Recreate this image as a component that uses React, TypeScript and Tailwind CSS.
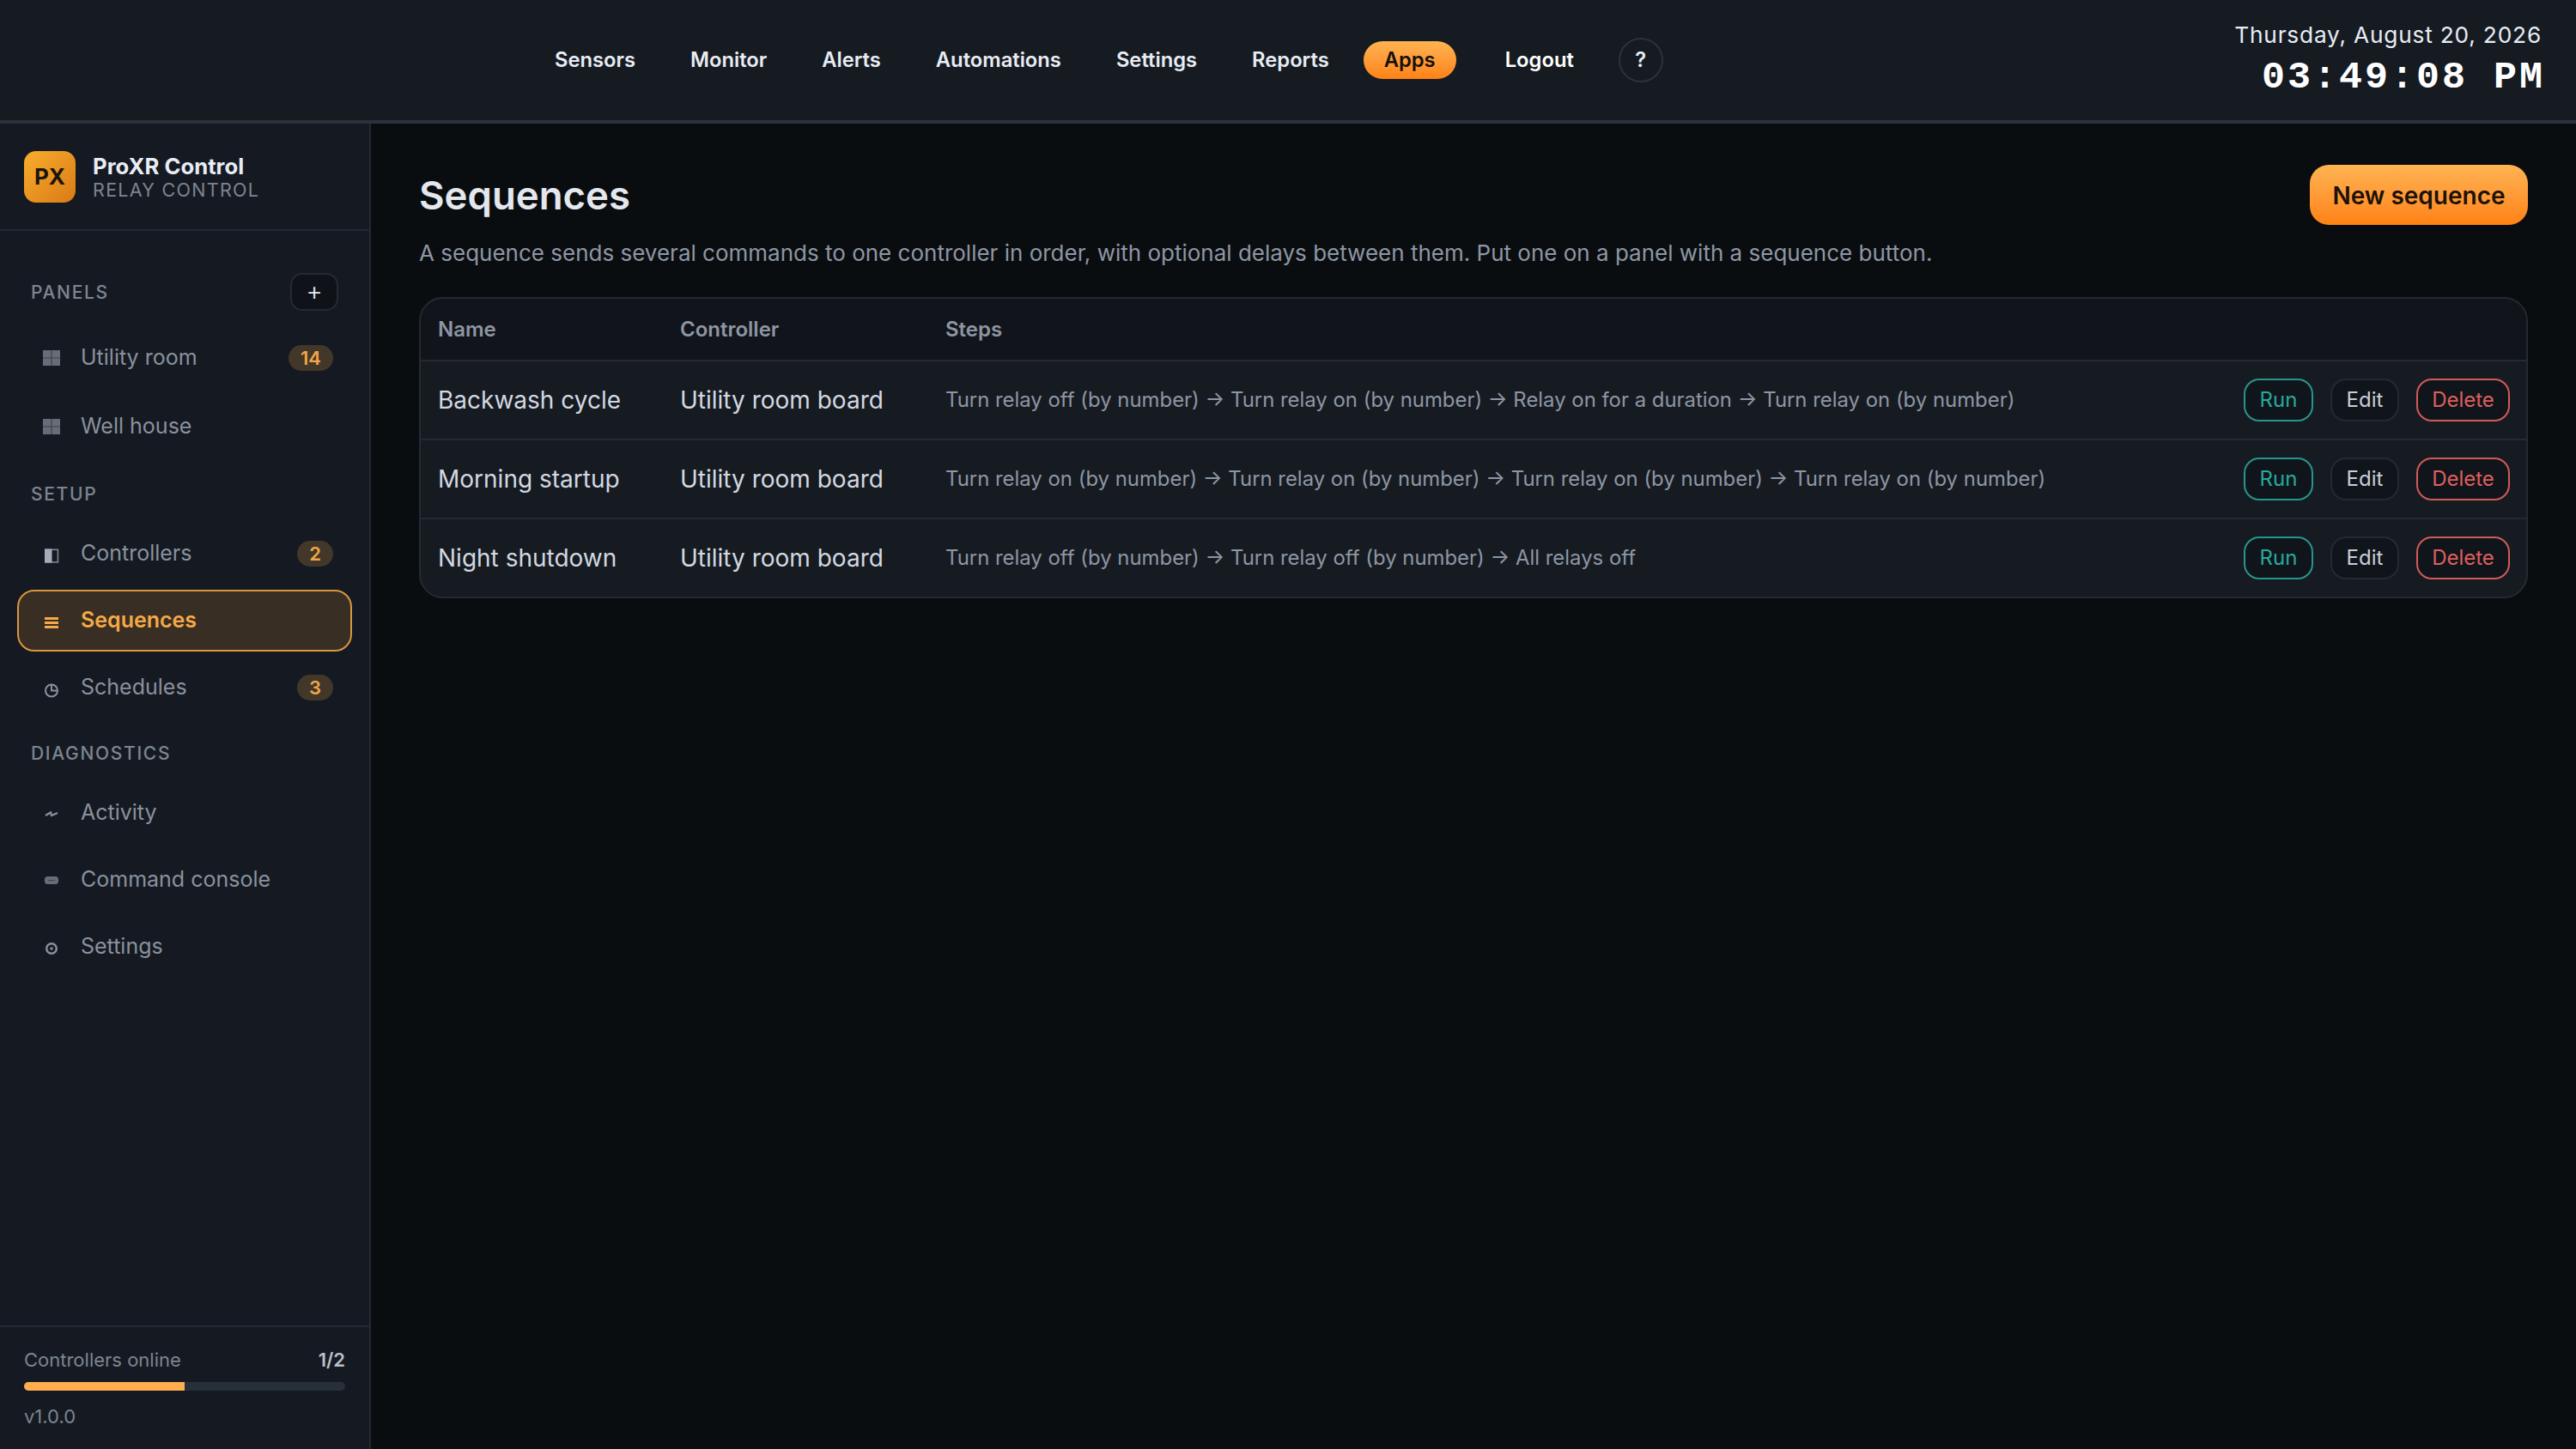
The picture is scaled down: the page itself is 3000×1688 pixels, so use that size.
import type { ReactNode } from "react"

const navItems = ["Sensors", "Monitor", "Alerts", "Automations", "Settings", "Reports"]

const GridIcon = (
    <svg viewBox="0 0 24 24" className="size-6" fill="currentColor">
        <rect x="2" y="3" width="20" height="18" opacity="0.7" />
        <path d="M12 3v18M2 12h20" stroke="#151a22" strokeWidth="1.2" opacity="0.5" />
    </svg>
)

const HalfSquareIcon = (
    <svg viewBox="0 0 24 24" className="size-6">
        <rect x="4.8" y="7.3" width="14.6" height="14.6" fill="none" stroke="#7d8590" strokeWidth="1.6" />
        <rect x="4" y="6.5" width="8.5" height="16" fill="#a4acb9" />
    </svg>
)

const LinesIcon = (
    <svg viewBox="0 0 24 24" className="size-6" fill="currentColor">
        <rect x="4" y="8" width="16" height="3" />
        <rect x="4" y="13" width="16" height="3" />
        <rect x="4" y="18" width="16" height="3" />
    </svg>
)

const ClockIcon = (
    <svg viewBox="0 0 24 24" className="size-6" fill="none" stroke="currentColor" strokeWidth="2">
        <circle cx="12" cy="15.5" r="7" />
        <path d="M12 9v6.5h7" />
    </svg>
)

const ActivityIcon = (
    <svg viewBox="0 0 24 24" className="size-6" fill="none" stroke="currentColor" strokeWidth="2.2">
        <path d="M5 15l6-3.5 1 3.5 7-3" />
    </svg>
)

const ConsoleIcon = (
    <svg viewBox="0 0 24 24" className="size-6" fill="currentColor">
        <rect x="4" y="8" width="16" height="9" rx="3.5" opacity="0.7" />
        <path d="M8 12.5h8" stroke="#151a22" strokeWidth="1" opacity="0.5" />
    </svg>
)

const SettingsIcon = (
    <svg viewBox="0 0 24 24" className="size-6" fill="none" stroke="currentColor">
        <circle cx="12" cy="14" r="5.8" strokeWidth="2.4" />
        <circle cx="12" cy="14" r="1.8" fill="currentColor" strokeWidth="0" />
    </svg>
)

interface SideItem {
    icon: ReactNode
    label: string
    badge?: string
    active?: boolean
}

const setupItems: SideItem[] = [
    { icon: HalfSquareIcon, label: "Controllers", badge: "2" },
    { icon: LinesIcon, label: "Sequences", active: true },
    { icon: ClockIcon, label: "Schedules", badge: "3" },
]

const diagnosticItems: SideItem[] = [
    { icon: ActivityIcon, label: "Activity" },
    { icon: ConsoleIcon, label: "Command console" },
    { icon: SettingsIcon, label: "Settings" },
]

const sequences = [
    {
        name: "Backwash cycle",
        steps: "Turn relay off (by number) → Turn relay on (by number) → Relay on for a duration → Turn relay on (by number)",
    },
    {
        name: "Morning startup",
        steps: "Turn relay on (by number) → Turn relay on (by number) → Turn relay on (by number) → Turn relay on (by number)",
    },
    {
        name: "Night shutdown",
        steps: "Turn relay off (by number) → Turn relay off (by number) → All relays off",
    },
]

function SideRow({ item }: { item: SideItem }) {
    return (
        <div
            className={`mx-5 flex h-[72px] items-center rounded-[20px] border-2 pl-[26px] pr-[20px] ${item.active ? "border-[#d9963f] bg-[#382e24] text-[#f5a947]" : "border-transparent text-[#8a919d]"}`}
        >
            <span className="flex w-[24px] justify-center">{item.icon}</span>
            <span className={`ml-[22px] text-[25px] ${item.active ? "font-semibold" : "font-normal"}`}>{item.label}</span>
            {item.badge && (
                <span className="ml-auto flex h-[30px] min-w-[42px] items-center justify-center rounded-full bg-[#43372a] px-[14px] text-[22px] font-semibold text-[#f0a649]">
                    {item.badge}
                </span>
            )}
        </div>
    )
}

function SectionLabel({ children }: { children: string }) {
    return <div className="pl-9 text-[21px] font-medium uppercase leading-none tracking-[0.08em] text-[#7d8590]">{children}</div>
}

export default function App() {
    return (
        <div className="flex h-screen w-full flex-col overflow-hidden bg-[#0a0d10] font-['Inter',sans-serif]">
            <header className="flex h-[144px] shrink-0 items-center border-b-4 border-[#2a323c] bg-[#161b22]">
                <nav className="ml-[622px] flex items-center gap-4 text-[23.75px] font-semibold text-[#e8ecf4]">
                    {navItems.map((item) => (
                        <span key={item} className="px-6">{item}</span>
                    ))}
                    <span className="flex h-[44px] items-center rounded-full bg-gradient-to-b from-[#ffb351] to-[#ff8212] px-6 text-[#15100a]">Apps</span>
                    <span className="ml-[17px] px-6 text-white">Logout</span>
                    <span className="ml-3 flex size-[52px] items-center justify-center rounded-full border-2 border-[#2a323c]">?</span>
                </nav>
                <div className="ml-auto mr-10 flex flex-col items-end">
                    <div className="text-[26.3px] leading-[32px] tracking-[0.03em] text-[#e8ecf4]">Thursday, August 20, 2026</div>
                    <div className="-mr-[4px] mt-[9px] font-['Liberation_Mono',monospace] text-[45px] font-bold leading-[50px] tracking-[3px] text-white">03:49:08 PM</div>
                </div>
            </header>

            <div className="flex min-h-0 flex-1">
                <aside className="flex w-[432px] shrink-0 flex-col border-r-2 border-[#232a33] bg-[#151a22]">
                    <div className="flex h-[125px] shrink-0 items-center gap-5 border-b-2 border-[#232a33] pl-7">
                        <div className="flex size-[60px] items-center justify-center rounded-[14px] bg-gradient-to-br from-[#f8ae2c] to-[#d97a16] text-[26px] font-bold text-[#1c1408]">PX</div>
                        <div>
                            <div className="text-[25.7px] font-bold leading-[30px] text-[#e8ecf4]">ProXR Control</div>
                            <div className="text-[21.5px] leading-[24px] tracking-[0.06em] text-[#7d8590]">RELAY CONTROL</div>
                        </div>
                    </div>

                    <div className="mt-[49px] flex items-center justify-between pr-[36px]">
                        <SectionLabel>Panels</SectionLabel>
                        <span className="flex h-[44px] w-[56px] items-center justify-center rounded-[14px] border-2 border-[#232a33] bg-[#0f1319] pb-[2px] text-[30px] font-light text-[#e8ecf4]">+</span>
                    </div>
                    <div className="mt-[19px] flex flex-col gap-2">
                        <SideRow item={{ icon: GridIcon, label: "Utility room", badge: "14" }} />
                        <SideRow item={{ icon: GridIcon, label: "Well house" }} />
                    </div>

                    <div className="mt-[32px]"><SectionLabel>Setup</SectionLabel></div>
                    <div className="mt-[23px] flex flex-col gap-[6px]">
                        {setupItems.map((item) => <SideRow key={item.label} item={item} />)}
                    </div>

                    <div className="mt-[30px]"><SectionLabel>Diagnostics</SectionLabel></div>
                    <div className="mt-[23px] flex flex-col gap-[6px]">
                        {diagnosticItems.map((item) => <SideRow key={item.label} item={item} />)}
                    </div>

                    <div className="mt-auto flex h-[144px] shrink-0 flex-col border-t-2 border-[#232a33] px-7 pt-[25px]">
                        <div className="flex items-center justify-between text-[22px] leading-[26px] text-[#7d8590]">
                            <span>Controllers online</span>
                            <span className="font-semibold text-[#b9c0cb]">1/2</span>
                        </div>
                        <div className="mt-[13px] h-[10px] w-full overflow-hidden rounded-full bg-[#272f38]">
                            <div className="h-full w-1/2 bg-[#ffae4d]" />
                        </div>
                        <div className="mt-[17px] text-[22px] leading-[26px] text-[#7d8590]">v1.0.0</div>
                    </div>
                </aside>

                <main className="min-w-0 flex-1 pl-[56px] pr-[56px] pt-12">
                    <div className="flex h-[70px] items-center justify-between">
                        <h1 className="pt-[2px] text-[45.5px] font-semibold text-[#e4e8ee]">Sequences</h1>
                        <button className="h-[70px] w-[254px] rounded-[22px] bg-gradient-to-b from-[#ffb351] to-[#ff8212] pt-[2px] text-[28px] font-semibold text-[#1c1206]">New sequence</button>
                    </div>
                    <p className="mt-[15px] text-[26px] leading-[36px] text-[#8e96a3]">
                        A sequence sends several commands to one controller in order, with optional delays between them. Put one on a panel with a sequence button.
                    </p>

                    <div className="mt-[33px] overflow-hidden rounded-[28px] border-2 border-[#232a33] bg-[#161b22]">
                        <div className="grid h-[71px] grid-cols-[282px_309px_1fr] items-center bg-[#11151b] pl-5 text-[24px] font-semibold text-[#8e96a3]">
                            <span>Name</span>
                            <span>Controller</span>
                            <span>Steps</span>
                        </div>
                        {sequences.map((row) => (
                            <div key={row.name} className="grid h-[92px] grid-cols-[282px_309px_1fr_auto] items-center border-t-2 border-[#232a33] pl-5 pr-[19px]">
                                <span className="text-[28px] text-[#d3d8e0]">{row.name}</span>
                                <span className="text-[28px] text-[#d3d8e0]">Utility room board</span>
                                <span className="text-[23.9px] text-[#8e96a3]">{row.steps}</span>
                                <div className="flex items-center gap-5 text-[24px]">
                                    <button className="h-[50px] w-[81px] rounded-[18px] border-2 border-[#26968c] bg-[#10151b] text-[#2aa89c]">Run</button>
                                    <button className="h-[50px] w-[80px] rounded-[18px] border-2 border-[#232a33] bg-[#10151b] text-[#c9ced6]">Edit</button>
                                    <button className="h-[50px] w-[109px] rounded-[18px] border-2 border-[#d15a58] bg-[#10151b] text-[#de5f5d]">Delete</button>
                                </div>
                            </div>
                        ))}
                    </div>
                </main>
            </div>
        </div>
    )
}
